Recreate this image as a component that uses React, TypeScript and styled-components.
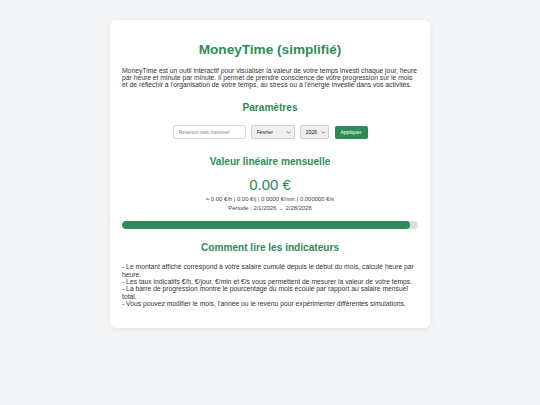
import styled, { createGlobalStyle } from "styled-components";
import { ChevronDown } from "lucide-react";

const GlobalStyle = createGlobalStyle`
	html, body {
		margin: 0;
		padding: 0;
		background: #f4f5f7;
		font-family: "Liberation Sans", Arial, sans-serif;
		color: #333;
	}
`;

const Page = styled.div`
	min-height: 405px;
	padding-top: 20px;
	box-sizing: border-box;
`;

const Card = styled.div`
	width: 320px;
	margin: 0 auto;
	background: #fff;
	border-radius: 6px;
	box-shadow: 0 1px 6px rgba(0, 0, 0, 0.08);
	padding: 12px 12px 21px;
	box-sizing: border-box;
`;

const Title = styled.h1`
	margin: 9.5px 0 0;
	font-size: 13.6px;
	line-height: 16px;
	font-weight: bold;
	color: #2e8b57;
	text-align: center;
`;

const Intro = styled.p`
	margin: 9px 0 0;
	font-size: 6.75px;
	line-height: 7.45px;
`;

const Heading = styled.h2<{ $gap: number }>`
	margin: ${(p) => p.$gap}px 0 0;
	font-size: 10.1px;
	line-height: 12px;
	font-weight: bold;
	color: #2e8b57;
	text-align: center;
`;

const Controls = styled.div`
	margin-top: 11px;
	display: flex;
	justify-content: center;
	align-items: center;
	gap: 5.5px;
	font-size: 5px;
	line-height: 1;
`;

const Input = styled.input`
	display: block;
	width: 73px;
	height: 14px;
	box-sizing: border-box;
	border: 1px solid #d5d5d5;
	border-radius: 3px;
	padding: 0 5px;
	font-family: inherit;
	font-size: 5px;
	outline: none;
	&::placeholder {
		color: #888;
	}
`;

const SelectWrap = styled.div<{ $w: number }>`
	position: relative;
	width: ${(p) => p.$w}px;
	height: 14px;
	svg {
		position: absolute;
		right: 3.5px;
		top: 4.5px;
		pointer-events: none;
		color: #333;
	}
`;

const Select = styled.select`
	display: block;
	appearance: none;
	width: 100%;
	height: 100%;
	box-sizing: border-box;
	border: 1px solid #ccc;
	border-radius: 2px;
	background: #efefef;
	padding: 0 0 0 4.5px;
	margin: 0;
	font-family: inherit;
	font-size: 5.3px;
	color: #222;
`;

const Button = styled.button`
	display: block;
	width: 33px;
	height: 13px;
	border: none;
	border-radius: 2px;
	background: #2e8b57;
	color: #fff;
	font-family: inherit;
	font-size: 5px;
	padding: 0;
`;

const Amount = styled.div`
	margin-top: 8.5px;
	font-size: 15px;
	line-height: 17px;
	color: #2e8b57;
	text-align: center;
`;

const Small = styled.div<{ $first?: boolean }>`
	margin-top: ${(p) => (p.$first ? 2 : 0)}px;
	font-size: 5.9px;
	line-height: 8.7px;
	color: #444;
	text-align: center;
`;

const Track = styled.div`
	margin-top: 8px;
	height: 8px;
	border-radius: 4px;
	background: #ddd;
	overflow: hidden;
`;

const Fill = styled.div`
	height: 100%;
	border-radius: 4px;
	background: #2e8b57;
`;

const Notes = styled.div`
	margin-top: 9px;
	font-size: 6.75px;
	line-height: 7.35px;
`;

const notes = [
	"- Le montant affiché correspond à votre salaire cumulé depuis le début du mois, calculé heure par heure.",
	"- Les taux indicatifs €/h, €/jour, €/min et €/s vous permettent de mesurer la valeur de votre temps.",
	"- La barre de progression montre le pourcentage du mois écoulé par rapport au salaire mensuel total.",
	"- Vous pouvez modifier le mois, l'année ou le revenu pour expérimenter différentes simulations.",
];

const App = () => {
	const progress = 97.3;
	return (
		<Page>
			<GlobalStyle />
			<Card>
				<Title>MoneyTime (simplifié)</Title>
				<Intro>
					MoneyTime est un outil interactif pour visualiser la valeur de votre temps investi chaque
					jour, heure par heure et minute par minute. Il permet de prendre conscience de votre
					progression sur le mois et de réfléchir à l'organisation de votre temps, au stress ou à
					l'énergie investie dans vos activités.
				</Intro>

				<Heading $gap={13.5}>Paramètres</Heading>
				<Controls>
					<Input placeholder="Revenus nets mensuel" />
					<SelectWrap $w={43.5}>
						<Select defaultValue="2">
							<option value="1">Janvier</option>
							<option value="2">Février</option>
							<option value="3">Mars</option>
						</Select>
						<ChevronDown size={5} strokeWidth={3} />
					</SelectWrap>
					<SelectWrap $w={29}>
						<Select defaultValue="2026">
							<option value="2025">2025</option>
							<option value="2026">2026</option>
						</Select>
						<ChevronDown size={5} strokeWidth={3} />
					</SelectWrap>
					<Button>Appliquer</Button>
				</Controls>

				<Heading $gap={16.5}>Valeur linéaire mensuelle</Heading>
				<Amount>0.00 €</Amount>
				<Small $first>≈ 0.00 €/h | 0.00 €/j | 0.0000 €/min | 0.000000 €/s</Small>
				<Small>Période : 2/1/2026 → 2/28/2026</Small>
				<Track>
					<Fill style={{ width: `${progress}%` }} />
				</Track>

				<Heading $gap={13.5}>Comment lire les indicateurs</Heading>
				<Notes>
					{notes.map((n) => (
						<div key={n}>{n}</div>
					))}
				</Notes>
			</Card>
		</Page>
	);
};

export default App;
